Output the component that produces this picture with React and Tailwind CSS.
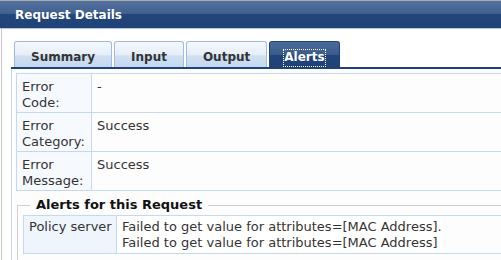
export default function App() {
  const rows = [
    [["Error", "Code:"], "-"],
    [["Error", "Category:"], "Success"],
    [["Error", "Message:"], "Success"],
  ];
  const tabs = ["Summary", "Input", "Output", "Alerts"];
  return (
    <div className="w-[501px] h-[260px] overflow-hidden bg-white font-['DejaVu_Sans',Verdana,sans-serif] text-[13px] leading-[16px] text-[#333]">
      <div className="h-[29px] border-t border-t-[#a9a9a9] border-b border-b-[#b3c6e3] bg-[linear-gradient(180deg,#52719f_0%,#41618f_46%,#22467b_50%,#1f4377_100%)] flex items-center pl-[15px] pt-[1px]">
        <span className="text-white font-bold text-[12px]">Request Details</span>
      </div>
      <div className="ml-[1px] border-l border-[#c8c8c8] h-[231px] pt-[12px] pl-[9px]">
        <div className="flex gap-[2px] pl-[3px] border-b-2 border-[#1f4377] w-[600px]">
          {tabs.map((t) => {
            const active = t === "Alerts";
            return (
              <div
                key={t}
                className={
                  active
                    ? "h-[26px] px-[13px] border border-b-0 border-[#1f4377] rounded-t-[3px] flex items-end justify-center bg-[linear-gradient(180deg,#4b6b9a_0%,#3b5b8b_50%,#21457a_54%,#1f4377_100%)] text-white font-bold text-[12px]"
                    : "h-[26px] px-[15px] border border-b-0 border-[#a3badf] rounded-t-[3px] flex items-end justify-center bg-[linear-gradient(180deg,#f5f8fd_0%,#e6eef9_50%,#d0e0f3_56%,#c4d8f0_100%)] text-[#333] font-bold text-[12px]"
                }
              >
                <span
                  className={
                    active
                      ? "inline-block border border-dotted border-white leading-[14px] pb-[2px]"
                      : "inline-block border border-transparent leading-[14px] pb-[2px]"
                  }
                >
                  {t}
                </span>
              </div>
            );
          })}
        </div>
        <div className="border-l border-[#c5d6ee] pt-[4px] pl-[4px] h-full w-[600px] bg-[#fdfdfe]">
          <div className="w-[600px] border-t border-[#c6d8f0]">
            {rows.map(([l, v], i) => (
              <div key={i} className="flex border-b border-[#c6d8f0]">
                <div className="w-[76px] shrink-0 border-l border-r border-[#c6d8f0] bg-[#f6f9fe] pl-[5px] pt-[5px] pb-[1px] whitespace-nowrap">
                  {l[0]}
                  <br />
                  {l[1]}
                </div>
                <div className="pl-[5px] pt-[5px]">{v}</div>
              </div>
            ))}
          </div>
          <fieldset className="mt-[6px] ml-[1px] w-[600px] border border-[#cfcfcf] pl-[5px] pt-[2px] pb-[6px]">
            <legend className="ml-[7px] px-[6px] font-bold text-[#111] leading-[16px]">
              Alerts for this Request
            </legend>
            <div className="flex border border-[#c6d8f0]">
              <div className="w-[93px] shrink-0 border-r border-[#c6d8f0] bg-[#eef5fd] pl-[5px] pt-[3px] pb-[2px] whitespace-nowrap">
                Policy server
              </div>
              <div className="pl-[5px] pt-[3px] pb-[2px] whitespace-nowrap bg-white">
                Failed to get value for attributes=[MAC Address].
                <br />
                Failed to get value for attributes=[MAC Address]
              </div>
            </div>
          </fieldset>
        </div>
      </div>
    </div>
  );
}
